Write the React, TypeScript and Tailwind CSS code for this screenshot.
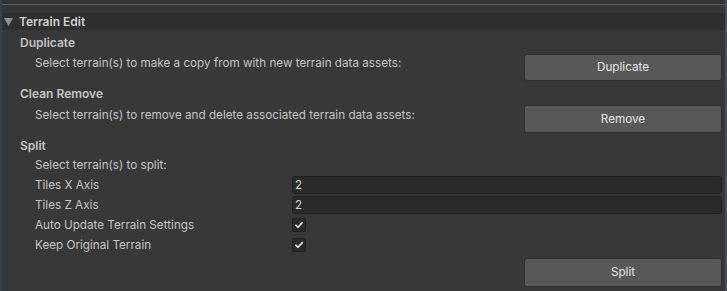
import React from 'react';

const font = { fontFamily: 'Inter, "Noto Sans", sans-serif' };

function Check() {
  return (
    <div className="w-[14px] h-[14px] rounded-[2px] bg-[#2a2a2a] border border-[#1f1f1f] flex items-center justify-center">
      <svg width="10" height="10" viewBox="0 0 10 10">
        <path d="M1.8 5.2 L4 7.3 L8.3 2.6" fill="none" stroke="#e0e0e0" strokeWidth="1.6" strokeLinecap="round" strokeLinejoin="round" />
      </svg>
    </div>
  );
}

function Btn({ label, h }: { label: string; h: string }) {
  return (
    <div className={`w-[198px] ${h} rounded-[3px] bg-[#585858] border border-[#303030] flex items-center justify-center pt-[1px] text-[#e4e4e4]`}>
      {label}
    </div>
  );
}

function Field({ label, children }: { label: string; children: React.ReactNode }) {
  return (
    <div className="h-[20px] flex items-center">
      <div className="w-[290px] pl-[33px] pt-[2px] shrink-0">{label}</div>
      <div className="flex-1">{children}</div>
    </div>
  );
}

export default function App() {
  return (
    <div className="w-[727px] h-[291px] bg-[#383838] flex text-[11.7px] text-[#c4c4c4] overflow-hidden" style={font}>
      <div className="w-[2px] bg-[#33414f]" />
      <div className="flex-1 flex flex-col">
        <div className="h-[4px] bg-[#333333]" />
        <div className="h-[1px] bg-[#5c5c5c]" />
        <div className="h-[8px] bg-[#363636]" />
        <div className="h-[17px] bg-[#2f2f2f] flex items-center">
          <svg width="9" height="8" viewBox="0 0 9 8" className="ml-[2px]">
            <path d="M0 0 H9 L4.5 8 Z" fill="#8f8f8f" />
          </svg>
          <span className="ml-[6px] font-semibold text-[12px] text-[#cfcfcf]">Terrain Edit</span>
        </div>

        <div className="pt-[2px] pr-[3px]">
          <div className="h-[20px] flex items-center pl-[18px] pt-[2px] font-semibold text-[12px]">Duplicate</div>
          <div className="flex justify-between h-[31px]">
            <div className="h-[20px] flex items-center pl-[33px] pt-[3px]">Select terrain(s) to make a copy from with new terrain data assets:</div>
            <div className="mt-[2px]"><Btn label="Duplicate" h="h-[27px]" /></div>
          </div>

          <div className="h-[20px] flex items-center pl-[18px] pt-[2px] font-semibold text-[12px]">Clean Remove</div>
          <div className="flex justify-between h-[32px]">
            <div className="h-[22px] flex items-center pl-[33px] pt-[3px]">Select terrain(s) to remove and delete associated terrain data assets:</div>
            <div className="mt-[2px]"><Btn label="Remove" h="h-[28px]" /></div>
          </div>

          <div className="h-[20px] flex items-center pl-[18px] pt-[2px] font-semibold text-[12px]">Split</div>
          <div className="h-[20px] flex items-center pl-[33px] pt-[2px]">Select terrain(s) to split:</div>
          <Field label="Tiles X Axis">
            <div className="h-[18px] rounded-[3px] bg-[#2a2a2a] border border-[#1f1f1f] flex items-center pl-[2px] pt-[1px] text-[#d2d2d2]">2</div>
          </Field>
          <Field label="Tiles Z Axis">
            <div className="h-[18px] rounded-[3px] bg-[#2a2a2a] border border-[#1f1f1f] flex items-center pl-[2px] pt-[1px] text-[#d2d2d2]">2</div>
          </Field>
          <Field label="Auto Update Terrain Settings"><Check /></Field>
          <Field label="Keep Original Terrain"><Check /></Field>
          <div className="flex justify-end mt-[3px]">
            <Btn label="Split" h="h-[29px]" />
          </div>
        </div>
      </div>
      <div className="w-[2px] bg-[#3f5163]" />
    </div>
  );
}
